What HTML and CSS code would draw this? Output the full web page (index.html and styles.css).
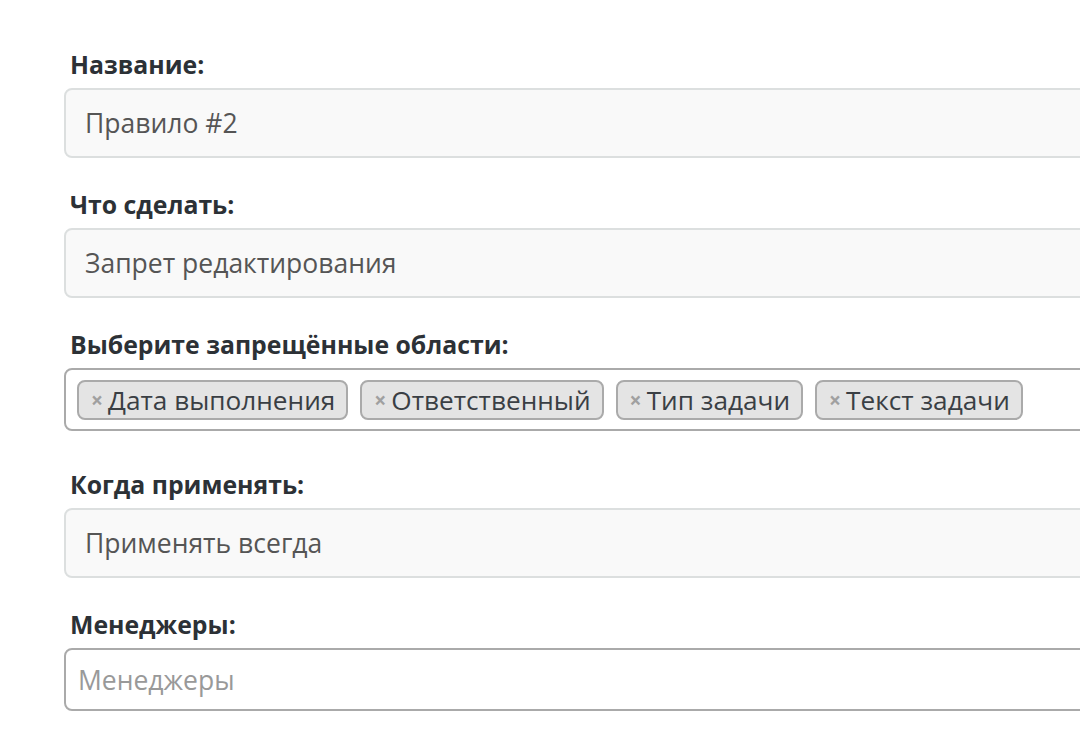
FILE: index.html
```html
<!DOCTYPE html>
<html lang="ru">
<head>
<meta charset="utf-8">
<link rel="stylesheet" href="styles.css">
</head>
<body>
<form class="form">
  <div class="group">
    <label class="label">Название:</label>
    <div class="field field-disabled">Правило #2</div>
  </div>
  <div class="group">
    <label class="label">Что сделать:</label>
    <div class="field field-disabled">Запрет редактирования</div>
  </div>
  <div class="group">
    <label class="label">Выберите запрещённые области:</label>
    <div class="multi">
      <span class="tag"><span class="tag-x">×</span>Дата выполнения</span>
      <span class="tag"><span class="tag-x">×</span>Ответственный</span>
      <span class="tag"><span class="tag-x">×</span>Тип задачи</span>
      <span class="tag"><span class="tag-x">×</span>Текст задачи</span>
    </div>
  </div>
  <div class="group">
    <label class="label">Когда применять:</label>
    <div class="field field-disabled">Применять всегда</div>
  </div>
  <div class="group">
    <label class="label">Менеджеры:</label>
    <div class="multi multi-empty"><span class="placeholder">Менеджеры</span></div>
  </div>
</form>
</body>
</html>
```

FILE: styles.css
```css
html, body {
  margin: 0;
  padding: 0;
  background: #ffffff;
  overflow: hidden;
}

body {
  font-family: "Open Sans", "Noto Sans", sans-serif;
  color: #555;
}

.form {
  padding: 47px 0 0 64px;
  width: 1060px;
}

.group {
  height: 140px;
  display: flex;
  flex-direction: column;
}

.label {
  display: block;
  font-size: 24.8px;
  font-weight: 700;
  color: #2c3136;
  line-height: 34px;
  margin: 0 0 7px 6px;
}

.field {
  box-sizing: border-box;
  height: 70px;
  border: 2px solid #dcdfdf;
  border-radius: 8px;
  display: flex;
  align-items: center;
  padding: 0 19px;
  font-size: 26.5px;
  color: #555;
}

.field-disabled {
  background: #f9f9f9;
}

.multi {
  box-sizing: border-box;
  height: 63px;
  border: 2px solid #aaaaaa;
  border-radius: 8px;
  background: #fff;
  display: flex;
  align-items: center;
  gap: 12px;
  padding: 0 11px;
  font-size: 26.2px;
}

.multi-empty {
  padding: 0 12px;
  font-size: 26.5px;
}

.placeholder {
  color: #999;
}

.tag {
  box-sizing: border-box;
  height: 40px;
  display: inline-flex;
  align-items: center;
  background: #e4e4e4;
  border: 2px solid #aaaaaa;
  border-radius: 8px;
  padding: 0 11px 0 12px;
  color: #3a3f44;
}

.tag-x {
  color: #a0a0a0;
  font-weight: 700;
  font-size: 21px;
  margin-right: 5px;
}
```
